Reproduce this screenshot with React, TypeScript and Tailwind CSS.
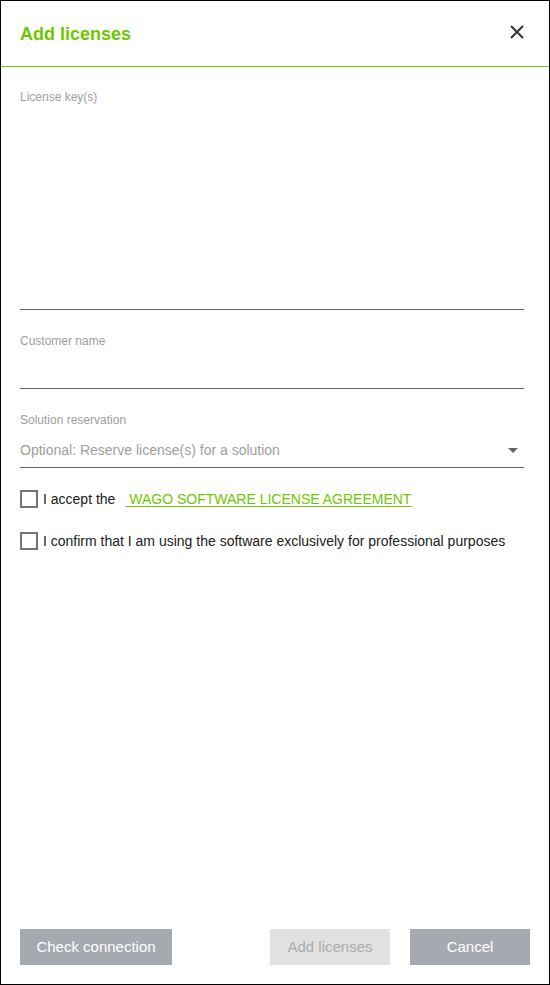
import { useState } from "react";

function Checkbox({ checked, onChange }: { checked: boolean; onChange: () => void }) {
    return (
        <button
            onClick={onChange}
            className="w-[18px] h-[18px] border-2 border-[#757575] bg-white shrink-0 flex items-center justify-center"
        >
            {checked && <div className="w-[8px] h-[8px] bg-[#6ec800]" />}
        </button>
    );
}

export default function App() {
    const [accept, setAccept] = useState(false);
    const [confirm, setConfirm] = useState(false);

    return (
        <div className="w-[550px] h-[985px] border border-black bg-white flex flex-col [font-family:'Liberation_Sans',Arial,sans-serif] text-[#212121]">
            {/* header */}
            <div className="h-[66px] shrink-0 flex items-center justify-between pl-[19px] pr-[25px] pb-[3px] border-b border-[#6ec800]">
                <h1 className="pt-[4px] text-[18px] font-bold text-[#6ec800] leading-[21px]">Add licenses</h1>
                <button className="w-[14px] h-[14px] flex items-center justify-center" title="Close">
                    <svg width="14" height="14" viewBox="0 0 14 14">
                        <path d="M1 1 L13 13 M13 1 L1 13" stroke="#333" strokeWidth="2" fill="none" />
                    </svg>
                </button>
            </div>

            {/* form */}
            <div className="flex flex-col pl-[19px] pr-[25px] pt-[23px]">
                <label className="text-[12px] leading-[14px] text-[#9e9e9e]">License key(s)</label>
                <textarea className="h-[206px] resize-none border-b border-[#666] outline-none text-[14px]" />

                <label className="mt-[24px] text-[12px] leading-[14px] text-[#9e9e9e]">Customer name</label>
                <input className="h-[41px] border-b border-[#666] outline-none text-[14px]" />

                <label className="mt-[24px] text-[12px] leading-[14px] text-[#9e9e9e]">Solution reservation</label>
                <div className="h-[41px] pt-[6px] flex items-center justify-between border-b border-[#666]">
                    <span className="text-[14px] text-[#9e9e9e]">Optional: Reserve license(s) for a solution</span>
                    <svg width="10" height="5" viewBox="0 0 10 5" className="mr-[6px]">
                        <path d="M0 0 L10 0 L5 5 Z" fill="#666" />
                    </svg>
                </div>

                <div className="mt-[22px] flex items-center h-[18px] text-[14px]">
                    <Checkbox checked={accept} onChange={() => setAccept(a => !a)} />
                    <span className="ml-[5px]">I accept the</span>
                    <a href="#" className="ml-[10px] text-[#6ec800] underline underline-offset-[2px]">{"\u00a0WAGO SOFTWARE LICENSE AGREEMENT"}</a>
                </div>

                <div className="mt-[24px] flex items-center h-[18px] text-[14px]">
                    <Checkbox checked={confirm} onChange={() => setConfirm(c => !c)} />
                    <span className="ml-[5px]">I confirm that I am using the software exclusively for professional purposes</span>
                </div>
            </div>

            <div className="flex-1" />

            {/* footer */}
            <div className="flex items-center px-[19px] pb-[19px]">
                <button className="w-[152px] h-[36px] bg-[#a5a9b0] text-white text-[15px]">Check connection</button>
                <div className="flex-1" />
                <button disabled className="w-[120px] h-[36px] bg-[#e1e1e1] text-[#ababab] text-[15px]">Add licenses</button>
                <button className="ml-[20px] w-[120px] h-[36px] bg-[#a5a9b0] text-white text-[15px]">Cancel</button>
            </div>
        </div>
    );
}
